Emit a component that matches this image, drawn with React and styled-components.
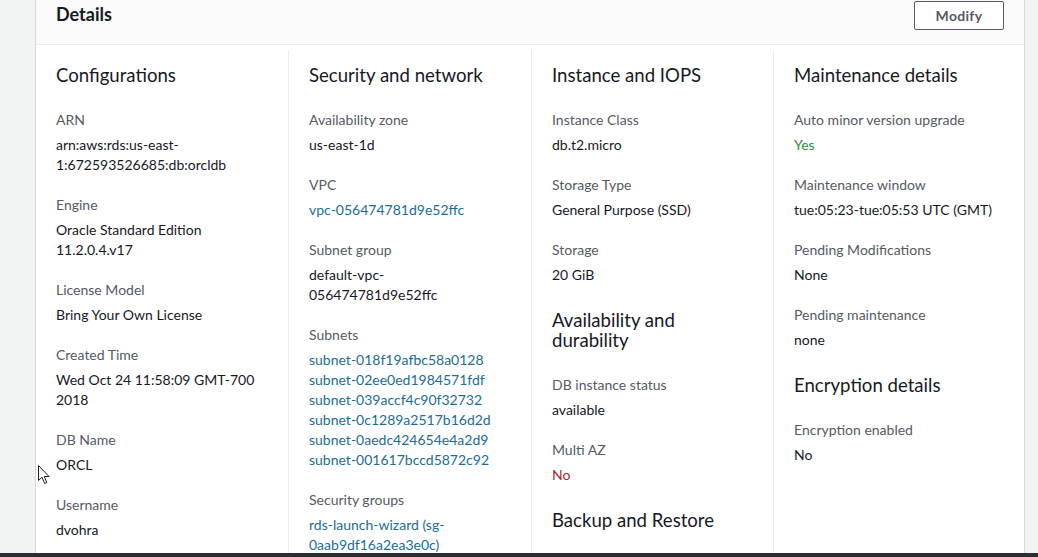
import React from "react";
import styled, { createGlobalStyle } from "styled-components";

const Global = createGlobalStyle`
  html, body { margin: 0; padding: 0; background: #f2f3f3; }
  body { font-family: Lato, "Open Sans", sans-serif; color: #16191f; overflow: hidden; }
  * { box-sizing: border-box; }
`;

const Page = styled.div`
  width: 1038px;
  height: 557px;
  display: flex;
  flex-direction: column;
  position: relative;
  overflow: hidden;
`;

const Main = styled.div`
  flex: 1;
  padding: 0 13px 0 35px;
  overflow: hidden;
`;

const Card = styled.section`
  height: 100%;
  background: #fff;
  border-left: 1px solid #d5dbdb;
  border-right: 1px solid #d5dbdb;
  display: flex;
  flex-direction: column;
`;

const Header = styled.header`
  height: 45px;
  flex: none;
  background: #fafafa;
  border-bottom: 1px solid #eaeded;
  display: flex;
  justify-content: space-between;
  align-items: flex-start;
  padding: 3px 20px 0 20px;
`;

const Title = styled.h2`
  margin: 0;
  font-size: 18px;
  line-height: 22px;
  font-weight: 700;
  color: #16191f;
`;

const Button = styled.button`
  margin-top: -2px;
  width: 90px;
  height: 29px;
  background: #fff;
  border: 1px solid #545b64;
  border-radius: 2px;
  font-family: inherit;
  font-size: 14px;
  font-weight: 700;
  color: #545b64;
  letter-spacing: 0.3px;
  cursor: pointer;
`;

const Body = styled.div`
  flex: 1;
  padding-top: 5px;
  display: grid;
  grid-template-columns: 252px 243px 242px 1fr;
  overflow: hidden;
`;

const Column = styled.div`
  padding: 15px 20px 0 20px;
  border-left: ${(p) => (p.$first ? "none" : "1px solid #eaeded")};
`;

const Heading = styled.h3`
  margin: ${(p) => (p.$first ? "0" : "25px")} 0 25px 0;
  font-size: 18.6px;
  line-height: 20px;
  font-weight: 400;
  color: #16191f;
`;

const Item = styled.div`
  margin-bottom: 20px;
`;

const Label = styled.div`
  font-size: 14px;
  line-height: 20px;
  color: #545b64;
  margin-bottom: 5px;
`;

const Value = styled.div`
  font-size: 14px;
  line-height: 20px;
  color: ${(p) =>
    p.$tone === "link" ? "#1b6d93" : p.$tone === "ok" ? "#2f8a3e" : p.$tone === "bad" ? "#b0262b" : "#16191f"};
`;

const Taskbar = styled.div`
  height: 4px;
  flex: none;
  background: #2b2f33;
`;

const Cursor = styled.svg`
  position: absolute;
  left: 38px;
  top: 465px;
`;

const Field = ({ label, values, tone }) => (
  <Item>
    <Label>{label}</Label>
    {values.map((v) => (
      <Value key={v} $tone={tone}>
        {v}
      </Value>
    ))}
  </Item>
);

export default function App() {
  return (
    <Page>
      <Global />
      <Main>
        <Card>
          <Header>
            <Title>Details</Title>
            <Button>Modify</Button>
          </Header>
          <Body>
            <Column $first>
              <Heading $first>Configurations</Heading>
              <Field label="ARN" values={["arn:aws:rds:us-east-1:672593526685:db:orcldb"]} />
              <Field label="Engine" values={["Oracle Standard Edition 11.2.0.4.v17"]} />
              <Field label="License Model" values={["Bring Your Own License"]} />
              <Field label="Created Time" values={["Wed Oct 24 11:58:09 GMT-700 2018"]} />
              <Field label="DB Name" values={["ORCL"]} />
              <Field label="Username" values={["dvohra"]} />
            </Column>
            <Column>
              <Heading $first>Security and network</Heading>
              <Field label="Availability zone" values={["us-east-1d"]} />
              <Field label="VPC" values={["vpc-056474781d9e52ffc"]} tone="link" />
              <Field label="Subnet group" values={["default-vpc-056474781d9e52ffc"]} />
              <Field
                label="Subnets"
                tone="link"
                values={[
                  "subnet-018f19afbc58a0128",
                  "subnet-02ee0ed1984571fdf",
                  "subnet-039accf4c90f32732",
                  "subnet-0c1289a2517b16d2d",
                  "subnet-0aedc424654e4a2d9",
                  "subnet-001617bccd5872c92",
                ]}
              />
              <Field label="Security groups" values={["rds-launch-wizard (sg-0aab9df16a2ea3e0c)"]} tone="link" />
            </Column>
            <Column>
              <Heading $first>Instance and IOPS</Heading>
              <Field label="Instance Class" values={["db.t2.micro"]} />
              <Field label="Storage Type" values={["General Purpose (SSD)"]} />
              <Field label="Storage" values={["20 GiB"]} />
              <Heading>Availability and durability</Heading>
              <Field label="DB instance status" values={["available"]} />
              <Field label="Multi AZ" values={["No"]} tone="bad" />
              <Heading>Backup and Restore</Heading>
            </Column>
            <Column>
              <Heading $first>Maintenance details</Heading>
              <Field label="Auto minor version upgrade" values={["Yes"]} tone="ok" />
              <Field label="Maintenance window" values={["tue:05:23-tue:05:53 UTC (GMT)"]} />
              <Field label="Pending Modifications" values={["None"]} />
              <Field label="Pending maintenance" values={["none"]} />
              <Heading>Encryption details</Heading>
              <Field label="Encryption enabled" values={["No"]} />
            </Column>
          </Body>
        </Card>
      </Main>
      <Taskbar />
      <Cursor width="13" height="20" viewBox="0 0 13 20">
        <path d="M0.5 0.5 L0.5 15.5 L4 12.2 L6.6 18.5 L8.8 17.6 L6.3 11.5 L11 11.5 Z" fill="#fff" stroke="#222" strokeWidth="1" strokeLinejoin="miter" />
      </Cursor>
    </Page>
  );
}
